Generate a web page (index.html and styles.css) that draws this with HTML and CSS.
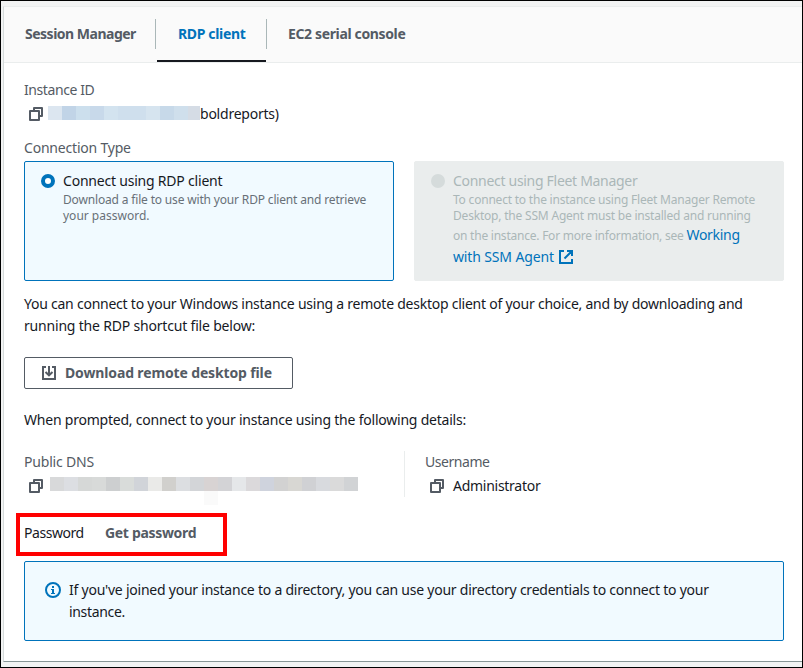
FILE: index.html
```html
<!DOCTYPE html>
<html lang="en">
<head>
<meta charset="utf-8">
<title>Connect to instance</title>
<link rel="stylesheet" href="styles.css">
</head>
<body>
<svg class="defs" width="0" height="0">
  <symbol id="copy" viewBox="0 0 14 14"><path d="M1 4h9v9H1zM5 4V1h8v8h-3" fill="none" stroke="currentColor" stroke-width="2" stroke-linejoin="round"/></symbol>
</svg>
<main class="panel">
  <nav class="tabs">
    <a class="tab tab-session"><span>Session Manager</span></a>
    <a class="tab tab-active"><span>RDP client</span></a>
    <a class="tab tab-serial"><span>EC2 serial console</span></a>
  </nav>
  <div class="content">
    <div class="label t-instance">Instance ID</div>
    <div class="value">
      <svg class="copy"><use href="#copy"/></svg>
      <span class="redacted redacted-id"></span><span class="t-bold">boldreports)</span>
    </div>
    <div class="label label-type t-type">Connection Type</div>
    <div class="cards">
      <div class="card card-selected">
        <span class="radio"></span>
        <div class="card-body">
          <div class="card-title t-rdp">Connect using RDP client</div>
          <div class="desc"><span class="t-d1">Download a file to use with your RDP client and retrieve</span><br><span class="t-d2">your password.</span></div>
        </div>
      </div>
      <div class="card card-disabled">
        <span class="radio"></span>
        <div class="card-body">
          <div class="card-title t-fleet">Connect using Fleet Manager</div>
          <div class="desc"><span class="t-f1">To connect to the instance using Fleet Manager Remote</span><br><span class="t-f2">Desktop, the SSM Agent must be installed and running</span></div>
          <div class="desc desc-link"><span class="t-f3">on the instance. For more information, see </span><a class="t-working">Working</a><br><a class="t-ssm">with SSM Agent</a><svg class="external" viewBox="0 0 14 14"><path d="M5 1H1v12h12V9M8 1h5v5M13 1L5.500 8.500" fill="none" stroke="currentColor" stroke-width="2"/></svg></div>
        </div>
      </div>
    </div>
    <p class="intro"><span class="t-p1">You can connect to your Windows instance using a remote desktop client of your choice, and by downloading and</span><br><span class="t-p2">running the RDP shortcut file below:</span></p>
    <button class="download"><svg class="download-icon" viewBox="0 0 14 14"><path d="M4 1H1v12h12V1h-3M7 0v9M3.500 6L7 9.300 10.500 6" fill="none" stroke="currentColor" stroke-width="2"/></svg><span class="t-download">Download remote desktop file</span></button>
    <p class="prompt"><span class="t-prompt">When prompted, connect to your instance using the following details:</span></p>
    <div class="details">
      <div class="detail">
        <div class="label t-dns">Public DNS</div>
        <div class="value"><svg class="copy"><use href="#copy"/></svg><span class="redacted redacted-dns"></span></div>
      </div>
      <div class="detail detail-user">
        <div class="label t-user">Username</div>
        <div class="value"><svg class="copy"><use href="#copy"/></svg><span class="t-admin">Administrator</span></div>
      </div>
    </div>
    <div class="password"><span class="pw-label t-pw">Password</span><a class="get t-get">Get password</a></div>
    <div class="info">
      <svg class="info-icon" viewBox="0 0 16 16"><circle cx="8" cy="8" r="7" fill="none" stroke="currentColor" stroke-width="2"/><path d="M7 4h2v2H7zM6 7h3v4h1v1H6v-1h1V8H6z" fill="currentColor"/></svg>
      <div><span class="t-i1">If you've joined your instance to a directory, you can use your directory credentials to connect to your</span><br><span class="t-i2">instance.</span></div>
    </div>
  </div>
</main>
</body>
</html>
```
FILE: styles.css
```css
* { box-sizing: border-box; }
body {
  margin: 0;
  width: 803px;
  height: 668px;
  padding: 5px 0 0 2px;
  overflow: hidden;
  border: 1px solid #000;
  background: #f2f3f3;
  color: #16191f;
  font: 14px/22px "Noto Sans", sans-serif;
  white-space: nowrap;
}
p { margin: 0; }
.defs { display: block; }
.panel {
  height: 656px;
  border: solid #d5dbdb;
  border-width: 1px 0 1px 1px;
  border-top-color: #eaeded;
  border-bottom-color: #879596;
  background: #fff;
}
.tabs {
  display: flex;
  height: 56px;
  border-bottom: 1px solid #eaeded;
  background: #fafafa;
}
.tab {
  display: flex;
  position: relative;
  height: 55px;
  padding-top: 16px;
  color: #545b64;
  font-weight: 700;
}
.tab-session { width: 151px; padding-left: 21px; letter-spacing: -0.5px; }
.tab-active { width: 111px; padding-left: 23px; color: #0073bb; letter-spacing: -0.35px; }
.tab-serial { padding-left: 22px; letter-spacing: -0.36px; }
.tab-session::after, .tab-active::after {
  content: "";
  position: absolute;
  top: 12px;
  right: -1px;
  width: 1px;
  height: 30px;
  background: #aab7b8;
}
.tab-active::before {
  content: "";
  position: absolute;
  left: 2px;
  bottom: 0;
  width: 109px;
  height: 2px;
  background: #16191f;
}
.content { padding: 16px 18px 0 20px; }
.label { color: #545b64; }
.value { display: flex; height: 22px; margin-top: 2px; padding-left: 5px; }
.copy { flex: none; width: 14px; height: 14px; margin-top: 4px; color: #545b64; }
.value > .t-admin { margin-left: 9px; }
.redacted { flex: none; height: 14px; }
.redacted-id {
  width: 152px;
  margin: 3px 0 0 5px;
  background: linear-gradient(90deg, #dce6f0 14px, #c1d4e7 14px 28px, #ccdfed 28px 42px, #c8d9ea 42px 56px, #d3e3ef 56px 70px, #cfdfed 70px 98px, #d6e4ef 98px 112px, #c7d9e9 112px 126px, #cfdfec 126px 140px, #d5dce5 140px);
}
.redacted-dns {
  position: relative;
  width: 308px;
  margin: 2px 0 0 7px;
  background: linear-gradient(90deg, #d8d9da 14px, #dcdee2 14px 28px, #d6d8d7 28px 42px, #d8dad9 42px 56px, #cdcfd0 56px 70px, #d9dcda 70px 84px, #d1d4d9 84px 98px, #eaeae8 98px 112px, #d1d0cd 112px 126px, #dcdee1 126px 140px, #d3d5d8 140px 154px, #d8d3d3 154px 168px, #d3d3d6 168px 182px, #e5e7e9 182px 196px, #dbd9db 196px 210px, #cfd3dd 210px 224px, #d2d2d2 224px 238px, #d8d7d3 238px 252px, #d0d1d4 252px 266px, #d8dade 266px 280px, #dadada 280px 294px, #d1d3d5 294px);
}
.redacted-dns::after {
  content: "";
  position: absolute;
  top: 14px;
  left: 154px;
  width: 14px;
  height: 14px;
  background: #fafafa;
}
.label-type { margin-top: 12px; }
.cards { display: flex; gap: 20px; margin-top: 2px; }
.card {
  display: flex;
  flex: none;
  width: 370px;
  height: 120px;
  padding: 8px 0 0 16px;
  border: 1px solid #eaeded;
  border-radius: 2px;
}
.card-selected { border-color: #0073bb; background: #f1faff; }
.card-disabled { background: #eaeded; color: #aab7b8; }
.radio {
  flex: none;
  width: 14px;
  height: 14px;
  margin: 4px 8px 0 0;
  border-radius: 50%;
  background: #d5dbdb;
}
.card-selected .radio { border: 4px solid #0073bb; background: #fff; }
.desc { color: #687078; font-size: 12px; line-height: 16px; }
.card-disabled .desc { color: #aab7b8; }
.card-disabled .desc-link { line-height: 21px; }
.desc a { color: #0073bb; font-size: 14px; }
.external { width: 14px; height: 14px; margin-left: 5px; color: #0073bb; vertical-align: -2px; }
.intro { margin-top: 12px; }
.download {
  display: flex;
  width: 269px;
  height: 32px;
  margin-top: 20px;
  padding: 4px 0 0 17px;
  border: 1px solid #545b64;
  border-radius: 2px;
  background: #fff;
  color: #545b64;
  font: 700 14px/22px "Noto Sans", sans-serif;
}
.download-icon { flex: none; width: 14px; height: 14px; margin: 4px 9px 0 0; }
.prompt { margin-top: 20px; }
.details { display: flex; margin-top: 20px; }
.detail { width: 380px; height: 46px; }
.detail-user { padding-left: 20px; border-left: 1px solid #eaeded; }
.password {
  display: flex;
  width: 211px;
  height: 43px;
  margin: 16px 0 0 -8px;
  padding: 5px 0 0 4px;
  border: 4px solid #f00;
}
.pw-label { width: 81px; }
.get { color: #545b64; font-weight: 700; }
.info {
  display: flex;
  width: 760px;
  height: 80px;
  margin-top: 5px;
  padding: 17px 0 0 20px;
  border: 1px solid #0073bb;
  border-radius: 2px;
  background: #f1faff;
}
.info-icon { flex: none; width: 16px; height: 16px; margin: 3px 8px 0 0; color: #0073bb; }

/* Tracking */
.t-instance { letter-spacing: -0.42px; }
.t-bold { letter-spacing: -0.23px; }
.t-type { letter-spacing: -0.2px; }
.t-rdp { letter-spacing: -0.21px; }
.t-d1 { letter-spacing: -0.165px; }
.t-fleet { letter-spacing: -0.3px; }
.t-f1 { letter-spacing: -0.21px; }
.t-f2 { letter-spacing: -0.2px; }
.t-f3 { letter-spacing: -0.23px; }
.t-working { letter-spacing: -0.3px; }
.t-ssm { letter-spacing: -0.14px; }
.t-p1 { letter-spacing: -0.24px; }
.t-p2 { letter-spacing: -0.19px; }
.t-download { letter-spacing: -0.14px; }
.t-prompt { letter-spacing: -0.22px; }
.t-dns { letter-spacing: -0.2px; }
.t-user { letter-spacing: -0.45px; }
.t-admin { letter-spacing: -0.27px; }
.t-pw { letter-spacing: -0.45px; }
.t-get { letter-spacing: -0.32px; }
.t-i1 { letter-spacing: -0.235px; }
.t-i2 { letter-spacing: -0.33px; }
```
